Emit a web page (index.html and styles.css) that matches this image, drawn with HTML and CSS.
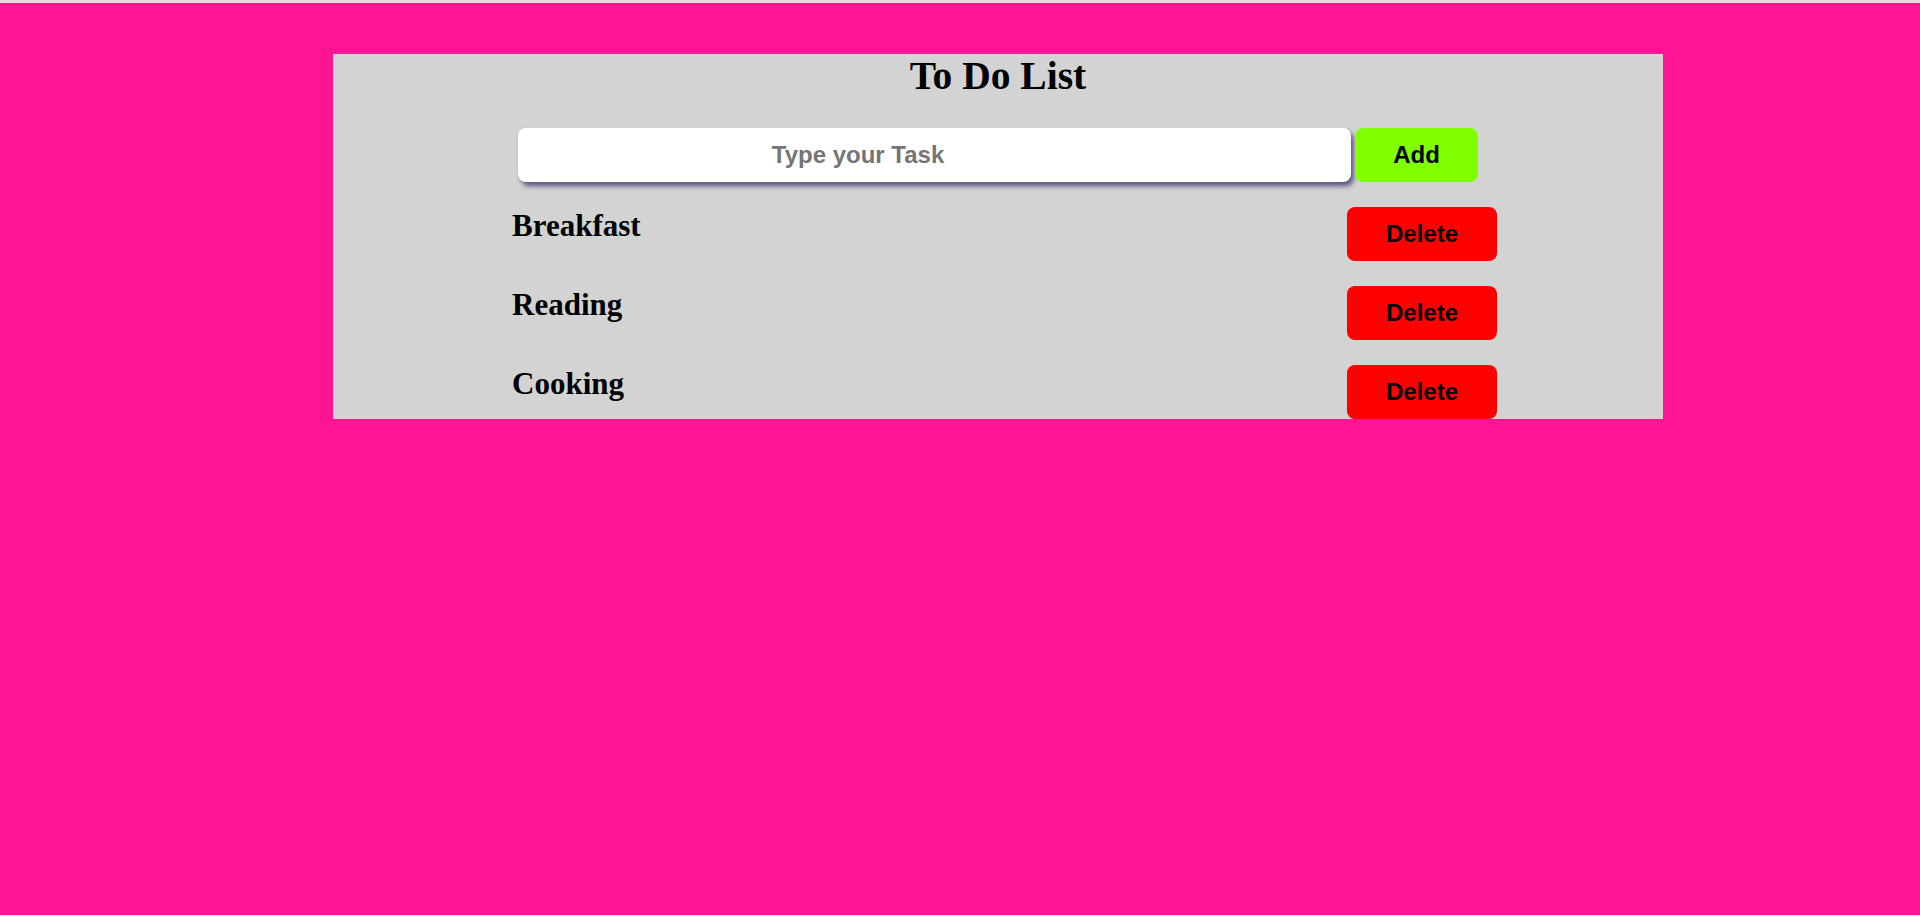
FILE: index.html
```html
<!DOCTYPE html>
<html lang="en">
<head>
<meta charset="utf-8">
<title>To Do List</title>
<link rel="stylesheet" href="styles.css">
</head>
<body>
<div class="frame">
  <div class="todo">
    <h1 class="title">To Do List</h1>
    <div class="entry">
      <input class="task-input" type="text" placeholder="Type your Task">
      <button class="btn btn-add">Add</button>
    </div>
    <ul class="list">
      <li class="item"><span class="item-text">Breakfast</span><button class="btn btn-delete">Delete</button></li>
      <li class="item"><span class="item-text">Reading</span><button class="btn btn-delete">Delete</button></li>
      <li class="item"><span class="item-text">Cooking</span><button class="btn btn-delete">Delete</button></li>
    </ul>
  </div>
</div>
</body>
</html>
```
FILE: styles.css
```css
html, body {
  margin: 0;
  padding: 0;
  background: #dedede;
}

.frame {
  box-sizing: border-box;
  height: 916px;
  border-top: 3px solid #dedede;
  border-bottom: 1px solid #e4e4e4;
  background: #ff1493;
  padding-top: 51px;
}

.todo {
  width: 1330px;
  margin-left: 333px;
  background: #d3d3d3;
}

.title {
  margin: 0;
  font-family: "Liberation Serif", "Times New Roman", serif;
  font-weight: bold;
  font-size: 39.5px;
  line-height: 45px;
  text-align: center;
  color: #000;
}

.entry {
  display: flex;
  justify-content: center;
  gap: 4px;
  margin-top: 29px;
}

.task-input {
  box-sizing: border-box;
  width: 833px;
  height: 54px;
  border: none;
  border-radius: 8px;
  background: #fff;
  padding: 0 160px 0 7px;
  text-align: center;
  font-family: "Liberation Sans", Arial, sans-serif;
  font-weight: bold;
  font-size: 24px;
  color: #000;
  box-shadow: 3px 4px 5px rgba(70, 60, 120, 0.85);
  outline: none;
}

.task-input::placeholder {
  color: #757575;
}

.btn {
  height: 54px;
  border: none;
  border-radius: 8px;
  font-family: "Liberation Sans", Arial, sans-serif;
  font-weight: bold;
  font-size: 24px;
  color: #000;
  padding: 0;
  cursor: pointer;
}

.btn-add {
  width: 123px;
  background: #7fff00;
}

.list {
  list-style: none;
  margin: 25px 0 0 179px;
  padding: 0;
  width: 985px;
  display: flex;
  flex-direction: column;
  gap: 25px;
}

.item {
  display: flex;
  justify-content: space-between;
  align-items: flex-start;
}

.item-text {
  font-family: "Liberation Serif", "Times New Roman", serif;
  font-weight: bold;
  font-size: 31px;
  line-height: 37px;
  color: #000;
}

.btn-delete {
  width: 150px;
  background: #ff0000;
}
```
